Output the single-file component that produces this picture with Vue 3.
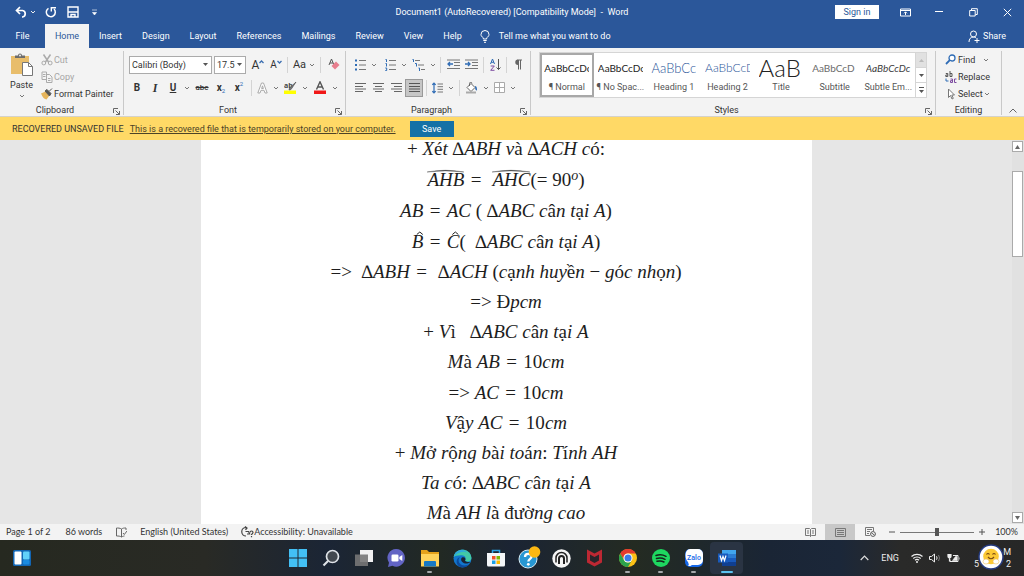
<script setup>
import { h } from 'vue'

const Chev = () =>
  h('svg', { class: 'chev', viewBox: '0 0 6 6', width: 6, height: 6 }, [
    h('path', { d: 'M1 2l2 2 2-2', fill: 'none', stroke: '#777' })
  ])

const Launcher = () =>
  h('svg', { viewBox: '0 0 7 7', width: 7, height: 7 }, [
    h('path', { d: 'M.5 5V.5H5M2.5 2.5l4 4M6.500 3v3.500H3', fill: 'none', stroke: '#666' })
  ])

const tabs = ['File', 'Home', 'Insert', 'Design', 'Layout', 'References', 'Mailings', 'Review', 'View', 'Help']

const styles = [
  { sample: 'AaBbCcDc', name: '¶ Normal', cls: 'body' },
  { sample: 'AaBbCcDc', name: '¶ No Spac...', cls: 'body' },
  { sample: 'AaBbCc', name: 'Heading 1', cls: 'h1' },
  { sample: 'AaBbCcD', name: 'Heading 2', cls: 'h2' },
  { sample: 'AaB', name: 'Title', cls: 'title' },
  { sample: 'AaBbCcD', name: 'Subtitle', cls: 'sub' },
  { sample: 'AaBbCcDc', name: 'Subtle Em...', cls: 'em' }
]

// {XYZ} marks a group under a wide hat, ^x a superscript
const lines = [
  { t: '+ Xét ∆ABH và ∆ACH có:', tall: true },
  { t: '{AHB} =  {AHC}(= 90^o)', tall: true },
  { t: 'AB = AC ( ∆ABC cân tại A)', tall: true },
  { t: '{B} = {C}(  ∆ABC cân tại A)' },
  { t: '=>  ∆ABH =  ∆ACH (cạnh huyền − góc nhọn)' },
  { t: '=> Đpcm' },
  { t: '+ Vì   ∆ABC cân tại A' },
  { t: 'Mà AB = 10cm', tall: true },
  { t: '=> AC = 10cm' },
  { t: 'Vậy AC = 10cm' },
  { t: '+ Mở rộng bài toán: Tính AH' },
  { t: 'Ta có: ∆ABC cân tại A' },
  { t: 'Mà AH là đường cao' }
]

// Plain Latin letters are set in italic, everything else stays upright;
// a relation sign gets a thick space on both sides
const runs = (t) =>
  (t.replace(/ = /g, '\u2004=\u2004').match(/\{[A-Z]+\}|\^[a-z]|[A-Za-z]+|[^A-Za-z{}^]+/g) || []).map((s) => {
    if (s[0] === '{') return { kind: s.length > 3 ? 'arc' : 'hat', s: s.slice(1, -1) }
    if (s[0] === '^') return { kind: 'sup', s: s.slice(1) }
    return { kind: /^[A-Za-z]/.test(s) ? 'it' : 'up', s }
  })
</script>

<template>
  <div class="app">
    <header class="top">
      <div class="titlebar">
        <div class="quick">
          <button aria-label="Undo"><svg width="13" height="12" viewBox="0 0 13 12"><path d="M5 1L1.500 4.500 5 8M2 4.500h5.500a3.300 3.300 0 010 6.500H7" fill="none" stroke="#fff" stroke-width="1.700" /></svg></button>
          <Chev class="pale" />
          <button aria-label="Repeat" class="repeat"><svg width="12" height="12" viewBox="0 0 12 12"><path d="M3.500 2.300A4.500 4.500 0 109 3" fill="none" stroke="#fff" stroke-width="1.500" /><path d="M6.300 5.500V1.700H11" fill="none" stroke="#fff" stroke-width="1.400" /></svg></button>
          <button aria-label="Save document" class="disk"><svg width="12" height="12" viewBox="0 0 12 12"><path d="M1 1h10v10H1zM1 6h10M4 11V8.500h4V11" fill="none" stroke="#fff" stroke-width="1.400" /></svg></button>
          <button aria-label="Customize toolbar" class="more"><svg width="5" height="7" viewBox="0 0 5 7"><path d="M0 1h5M.5 3.500h4L2.500 6z" fill="#fff" stroke="#fff" stroke-width=".6" /></svg></button>
        </div>
        <h1>Document1 (AutoRecovered) [Compatibility Mode]&nbsp; -&nbsp; Word</h1>
        <div class="window">
          <button class="signin">Sign in</button>
          <button aria-label="Ribbon display options"><svg width="11" height="9" viewBox="0 0 11 9"><path d="M.5 1h10v7H.5zM.5 2.500h10M5.500 7V4M4 5.300l1.500-1.500L7 5.300" fill="none" stroke="#fff" /></svg></button>
          <button aria-label="Minimize"><svg width="8" height="8" viewBox="0 0 8 8"><path d="M0 3.500h8" stroke="#fff" /></svg></button>
          <button aria-label="Restore"><svg width="9" height="9" viewBox="0 0 9 9"><path d="M.7 2.500h5.500v5.500H.7zM2.500 2.300V.7h5.800v5.800H6.500" fill="none" stroke="#fff" /></svg></button>
          <button aria-label="Close"><svg width="9" height="9" viewBox="0 0 9 9"><path d="M.8.8l7.400 7.400M8.200.8L.8 8.200" stroke="#fff" /></svg></button>
        </div>
      </div>
      <nav class="tabs">
        <button v-for="t in tabs" :key="t" :class="['tab', 'tab-' + t.toLowerCase()]">{{ t }}</button>
        <button class="tell">
          <svg width="10" height="13" viewBox="0 0 10 13"><path d="M3.300 9V7.800C1.800 6.800 1 5.800 1 4.500a4 4 0 018 0c0 1.300-.8 2.300-2.300 3.300V9zM3.300 10.500h3.400M4 12.300h2" fill="none" stroke="#fff" /></svg>
          Tell me what you want to do
        </button>
        <button class="share">
          <svg width="12" height="13" viewBox="0 0 12 13"><path d="M5.500 7A3 3 0 105.500 1a3 3 0 000 6zM1 12c0-3 1.500-5 4.500-5 1 0 1.800.3 2.400.8M9 8v5M6.500 10.500h5" fill="none" stroke="#fff" /></svg>
          Share
        </button>
      </nav>
    </header>

    <section class="ribbon">
      <div class="group clipboard">
        <div class="tools">
          <button class="paste">
            <svg width="22" height="23" viewBox="0 0 22 23"><path d="M0 3h18v18H0z" fill="#e8bd6b" /><path d="M4 5V2.500h3a2 2 0 014 0h3V5z" fill="#6c6c6c" /><circle cx="9" cy="2.500" r="1" fill="#eee" /><path d="M11.500 9.500h6l4 4v9h-10z" fill="#fff" stroke="#777" /><path d="M17.500 9.500v4h4" fill="none" stroke="#777" /></svg>
            <span>Paste</span>
            <Chev />
          </button>
          <div class="clip">
            <button class="off"><svg width="12" height="12" viewBox="0 0 12 12"><path d="M2.500.5l5 7.500M9.500.5l-5 7.500" stroke="#aaa" stroke-width="1.500" /><circle cx="2.800" cy="9" r="1.900" fill="none" stroke="#aaa" /><circle cx="9.200" cy="9" r="1.900" fill="none" stroke="#aaa" /></svg>Cut</button>
            <button class="off"><svg width="12" height="12" viewBox="0 0 12 12"><path d="M1 1h4.500v7.500H1zM5.500 3.500h3l2.500 2.500v5.500H5.500zM2 3.500h2.500M2 5.500h2.500M7 7.500h2.500M7 9.500h2.500" fill="none" stroke="#aaa" /></svg>Copy</button>
            <button><svg width="12" height="12" viewBox="0 0 12 12"><path d="M0 5.500l4.500-2 4 4-3 4c-2-.3-4-2-5.500-6z" fill="#e6b55c" /><path d="M4 3l2-1.500 4 4L8.500 8zM8.500 3l2.500-2.500" fill="#555" stroke="#555" /></svg>Format Painter</button>
          </div>
        </div>
        <footer>Clipboard<button class="launch" aria-label="Clipboard options"><Launcher /></button></footer>
      </div>

      <div class="group font">
        <div class="tools stack">
          <div class="row">
            <label class="combo family"><select aria-label="Font"><option>Calibri (Body)</option></select><svg width="5" height="3" viewBox="0 0 5 3"><path d="M0 0h5L2.500 3z" fill="#555" /></svg></label>
            <label class="combo size"><select aria-label="Font size"><option>17.5</option></select><svg width="5" height="3" viewBox="0 0 5 3"><path d="M0 0h5L2.500 3z" fill="#555" /></svg></label>
            <button class="w20 big" aria-label="Grow font">A<svg width="5" height="4" viewBox="0 0 5 4"><path d="M.5 3l2-2 2 2" fill="none" stroke="#3a6db0" stroke-width="1.300" /></svg></button>
            <button class="w16 mid" aria-label="Shrink font">A<svg width="5" height="4" viewBox="0 0 5 4"><path d="M.5 1l2 2 2-2" fill="none" stroke="#3a6db0" stroke-width="1.300" /></svg></button>
            <i class="sep"></i>
            <button class="w26 case" aria-label="Change case"><span class="aa">Aa</span><Chev /></button>
            <i class="sep"></i>
            <button class="w20" aria-label="Clear formatting"><svg width="12" height="13" viewBox="0 0 12 13"><path d="M1 7L3.500 1 6 7M2 5h3" fill="none" stroke="#555" /><path d="M8 3.500l3.500 3.500-4.500 4.500L3.500 8z" fill="#e87e8e" /></svg></button>
          </div>
          <div class="row second">
            <button class="w18"><b>B</b></button>
            <button class="w18"><b class="ital">I</b></button>
            <button class="w18"><b class="under">U</b></button>
            <button class="w10" aria-label="Underline style"><Chev /></button>
            <button class="w20"><s>abc</s></button>
            <button class="w18 scr" aria-label="Subscript"><b>x</b><sub>2</sub></button>
            <button class="w18 scr" aria-label="Superscript"><b>x</b><sup>2</sup></button>
            <i class="sep"></i>
            <button class="w26 fx" aria-label="Text effects"><svg width="11" height="12" viewBox="0 0 11 12"><path d="M.8 11L4.500 1h2l3.700 10H8L7 8.300H4L3 11zM4.600 6.500h1.800l-.9-2.700z" fill="#fff" stroke="#aaa" /></svg><Chev /></button>
            <button class="w30" aria-label="Highlight"><svg width="13" height="13" viewBox="0 0 13 13"><path d="M0 9.500h12V13H0z" fill="#ff0" /><text x="0" y="7" font-size="7" fill="#444" font-family="Open Sans, sans-serif" font-weight="700">ab</text><path d="M12 1L7 8.500l-2 .5.500-2z" fill="#777" stroke="#555" stroke-width=".7" /></svg><Chev /></button>
            <button class="w30" aria-label="Font colour"><svg width="13" height="13" viewBox="0 0 13 13"><path d="M0 9.500h12V13H0z" fill="#f01818" /><path d="M2.500 8.500L6 .8l3.500 7.700M3.700 6h4.600" fill="none" stroke="#555" stroke-width="1.400" /></svg><Chev /></button>
          </div>
        </div>
        <footer>Font<button class="launch" aria-label="Font options"><Launcher /></button></footer>
      </div>

      <div class="group para">
        <div class="tools stack">
          <div class="row">
            <button class="w30" aria-label="Bullets"><svg width="11" height="12" viewBox="0 0 11 12"><path d="M0 1.500h2M0 6h2M0 10.500h2" stroke="#2f6cb5" stroke-width="2" /><path d="M4 1.500h7M4 6h7M4 10.500h7" stroke="#777" /></svg><Chev /></button>
            <button class="w30" aria-label="Numbering"><svg width="11" height="12" viewBox="0 0 11 12"><path d="M.5.500h1v2.500M.5 4.500h1v3M.3 9h1.400v2.500H.3" fill="none" stroke="#2f6cb5" /><path d="M4 1.500h7M4 6h7M4 10.500h7" stroke="#777" /></svg><Chev /></button>
            <button class="w26" aria-label="Multilevel list"><svg width="13" height="12" viewBox="0 0 13 12"><path d="M.5.500h1V3M3 4.500h1.500v3M6.500 9h1v3" fill="none" stroke="#2f6cb5" /><path d="M3 1.500h5M6 6h6M9 10.500h4" stroke="#777" /></svg><Chev /></button>
            <i class="sep"></i>
            <button class="w18" aria-label="Decrease indent"><svg width="13" height="11" viewBox="0 0 13 11"><path d="M0 1h13M7 3.500h6M7 6.500h6M0 9.500h13" stroke="#777" /><path d="M6 5H1M3 3L1 5l2 2" fill="none" stroke="#2f6cb5" stroke-width="1.300" /></svg></button>
            <button class="w18" aria-label="Increase indent"><svg width="13" height="11" viewBox="0 0 13 11"><path d="M0 1h13M7 3.500h6M7 6.500h6M0 9.500h13" stroke="#777" /><path d="M0 5h5M3 3l2 2-2 2" fill="none" stroke="#2f6cb5" stroke-width="1.300" /></svg></button>
            <i class="sep"></i>
            <button class="w16" aria-label="Sort"><svg width="11" height="13" viewBox="0 0 11 13"><path d="M.5 6l2-5 2 5M1.200 4.300h2.600" fill="none" stroke="#2f6cb5" /><path d="M.7 8h3.600L.7 12.300h3.800" fill="none" stroke="#7d4ca0" /><path d="M8.500 1v10.500M6.500 9.500l2 2 2-2" fill="none" stroke="#555" /></svg></button>
            <i class="sep"></i>
            <button class="w16" aria-label="Show marks"><svg width="8" height="11" viewBox="0 0 8 11"><path d="M4 6a2.600 2.600 0 010-5.500z" fill="#666" /><path d="M3.500 1H8M4.500 1v9.500M6.500 1v9.500" fill="none" stroke="#666" /></svg></button>
          </div>
          <div class="row second">
            <button class="w18" aria-label="Align left"><svg width="11" height="9" viewBox="0 0 11 9"><path d="M0 .5h11M0 3.500h8M0 6h11M0 8.500h8" stroke="#666" /></svg></button>
            <button class="w18" aria-label="Center"><svg width="11" height="9" viewBox="0 0 11 9"><path d="M0 .5h11M2 3.500h7M0 6h11M2 8.500h7" stroke="#666" /></svg></button>
            <button class="w18" aria-label="Align right"><svg width="11" height="9" viewBox="0 0 11 9"><path d="M0 .5h11M3 3.500h8M0 6h11M3 8.500h8" stroke="#666" /></svg></button>
            <button class="w18 on" aria-label="Justify"><svg width="11" height="9" viewBox="0 0 11 9"><path d="M0 .5h11M0 3.500h11M0 6h11M0 8.500h11" stroke="#555" /></svg></button>
            <i class="sep"></i>
            <button class="w26" aria-label="Line spacing"><svg width="11" height="12" viewBox="0 0 11 12"><path d="M2 1v10M.3 2.800L2 1l1.700 1.800M.3 9.200L2 11l1.700-1.800" fill="none" stroke="#2f6cb5" stroke-width="1.200" /><path d="M5.500 2h5.500M5.500 4.700h5.500M5.500 7.300h5.500M5.500 10h5.500" stroke="#777" /></svg><Chev /></button>
            <i class="sep"></i>
            <button class="w28" aria-label="Shading"><svg width="13" height="12" viewBox="0 0 13 12"><path d="M6 1.500l4 4-4 4-4-4z" fill="#fff" stroke="#666" /><path d="M4.500 4V1.500a1.200 1.200 0 012.400 0" fill="none" stroke="#666" /><path d="M10 4c2 0 2 3 2 4.500-1.500 0-2-1.500-2-4.500z" fill="#2f6cb5" /><path d="M1 10.500h10" stroke="#aaa" stroke-width="2" /></svg><Chev /></button>
            <button class="w28" aria-label="Borders"><svg width="11" height="11" viewBox="0 0 11 11"><path d="M.5.500h10v10H.5zM5.500 0v11M0 5.500h11" fill="#fff" stroke="#aaa" /></svg><Chev /></button>
          </div>
        </div>
        <footer>Paragraph<button class="launch" aria-label="Paragraph options"><Launcher /></button></footer>
      </div>

      <div class="group styles">
        <div class="tools">
          <div class="gallery">
            <button v-for="(s, i) in styles" :key="s.name" :class="['style', { picked: i === 0 }]">
              <span :class="['sample', s.cls]">{{ s.sample }}</span>
              <span class="sname">{{ s.name }}</span>
            </button>
            <div class="spin">
              <button aria-label="Previous styles" class="dim"><svg width="5" height="3" viewBox="0 0 5 3"><path d="M0 3h5L2.500 0z" fill="#bbb" /></svg></button>
              <button aria-label="Next styles"><svg width="5" height="3" viewBox="0 0 5 3"><path d="M0 0h5L2.500 3z" fill="#555" /></svg></button>
              <button aria-label="All styles"><svg width="5" height="6" viewBox="0 0 5 6"><path d="M0 0h5v1H0zM0 3h5L2.500 6z" fill="#555" /></svg></button>
            </div>
          </div>
        </div>
        <footer>Styles<button class="launch" aria-label="Style options"><Launcher /></button></footer>
      </div>

      <div class="group editing">
        <div class="tools edit">
          <button><svg width="12" height="11" viewBox="0 0 12 11"><circle cx="7" cy="4" r="3" fill="#fff" stroke="#2f6cb5" stroke-width="1.300" /><path d="M4.800 6.200L1 10" stroke="#2f6cb5" stroke-width="1.800" /></svg>Find<Chev class="gap" /></button>
          <button><svg width="12" height="12" viewBox="0 0 12 12"><path d="M.8 2.500h2v3H.8V4h2M5 0v5.500h2v-3H5" fill="none" stroke="#555" /><path d="M5.500 8h2v3.500h-2V9.700h2M11.500 8H9.500v3.500h2" fill="none" stroke="#7d4ca0" /><path d="M1 7.500v2.500h2.500" fill="none" stroke="#2f6cb5" /></svg>Replace</button>
          <button><svg width="12" height="12" viewBox="0 0 12 12"><path d="M3.500 1v8.500l2-2 1.500 3.500 1.300-.6L6.800 7h2.700z" fill="#fff" stroke="#777" /></svg>Select<Chev /></button>
        </div>
        <footer>Editing</footer>
      </div>
      <button class="collapse" aria-label="Collapse ribbon"><svg width="8" height="5" viewBox="0 0 8 5"><path d="M.5 4.500L4 1l3.500 3.500" fill="none" stroke="#666" /></svg></button>
    </section>

    <div class="notice">
      <strong>RECOVERED UNSAVED FILE</strong>
      <a href="#">This is a recovered file that is temporarily stored on your computer.</a>
      <button>Save</button>
    </div>

    <main class="canvas">
      <div class="view">
        <article class="page">
          <p v-for="(l, i) in lines" :key="i" :class="{ tall: l.tall }"><template v-for="(r, j) in runs(l.t)" :key="j"><span :class="r.kind">{{ r.s }}<svg v-if="r.kind === 'arc'" class="over" viewBox="0 0 32 4" preserveAspectRatio="none"><path d="M0 3Q16-.5 32 3Q16 .8 0 3z" fill="#333" stroke="#333" stroke-width=".3" /></svg><svg v-if="r.kind === 'hat'" class="over small" viewBox="0 0 8 4"><path d="M1 3.500l3-2.500 3 2.500" fill="none" stroke="#222" /></svg></span></template></p>
        </article>
      </div>
      <div class="scroll">
        <button aria-label="Scroll up"><svg width="5" height="4" viewBox="0 0 5 4"><path d="M0 4h5L2.500 0z" fill="#666" /></svg></button>
        <div class="track"><div class="thumb"></div></div>
        <button aria-label="Scroll down"><svg width="5" height="4" viewBox="0 0 5 4"><path d="M0 0h5L2.500 4z" fill="#666" /></svg></button>
      </div>
    </main>

    <div class="status">
      <span class="pg">Page 1 of 2</span>
      <span class="wd">86 words</span>
      <svg class="proof" width="11" height="11" viewBox="0 0 11 11"><path d="M5.500 2C4 1 2 1 .5 1v8c2 0 3.500 0 5 1zM5.500 2C7 1 8 1 10 1v2M5.500 10c1-.6 1.500-.8 3-1M7 6l1.300 1.500L11 4" fill="none" stroke="#666" /></svg>
      <span class="lang">English (United States)</span>
      <svg width="13" height="12" viewBox="0 0 13 12"><path d="M5 1.500A4 4 0 105 10M4 .5l2 1.500-1.500 1.800M4.500 5.500h3l1.500 3M6 8h2" fill="none" stroke="#444" stroke-width="1.200" /><path d="M9 6.500c0-2 3-2 3 0 0 1.300-1.500 1-1.500 2.500M10.500 10v1.300" fill="none" stroke="#444" stroke-width="1.200" /></svg>
      <span>Accessibility: Unavailable</span>
      <div class="zoom">
        <button aria-label="Read mode"><svg width="11" height="9" viewBox="0 0 11 9"><path d="M.5.500h4l1 1 1-1h4v7h-4l-1 1-1-1h-4zM5.500 1.500v7M2 3h2M2 5h2M7 3h2M7 5h2" fill="none" stroke="#777" /></svg></button>
        <button aria-label="Print layout" class="act"><svg width="11" height="9" viewBox="0 0 11 9"><path d="M.5.500h10v8H.5zM2 2.500h7M2 4.500h7M2 6.500h7" fill="none" stroke="#777" /></svg></button>
        <button aria-label="Web layout"><svg width="11" height="10" viewBox="0 0 11 10"><path d="M5 8.500H.5v-8h8V4M2 2.500h5M2 4.500h3M2 6.500h2" fill="none" stroke="#777" /><circle cx="8" cy="7" r="2.400" fill="#fff" stroke="#555" /><path d="M6.500 6l3 2" stroke="#555" /></svg></button>
        <button class="pm" aria-label="Zoom out"><svg width="6" height="6" viewBox="0 0 6 6"><path d="M0 3h6" stroke="#555" /></svg></button>
        <input type="range" min="0" max="100" value="50" aria-label="Zoom" />
        <button class="pm" aria-label="Zoom in"><svg width="6" height="6" viewBox="0 0 6 6"><path d="M0 3h6M3 0v6" stroke="#555" /></svg></button>
        <span class="pct">100%</span>
      </div>
    </div>

    <footer class="taskbar">
      <button class="widgets" aria-label="Widgets"><svg width="18" height="16" viewBox="0 0 18 16"><rect width="18" height="16" rx="1.500" fill="#1266b4" /><rect x="1.500" y="1.500" width="7" height="13" rx="1" fill="#fff" /><rect x="10" y="1.500" width="6.500" height="8" rx="1" fill="#62d1fa" /><rect x="10" y="10" width="6.500" height="4.500" rx="1" fill="#1a8be0" /></svg></button>
      <div class="apps">
        <button aria-label="Start"><svg width="18" height="18" viewBox="0 0 18 18"><path d="M0 0h8.500v8.500H0zM9.500 0H18v8.500H9.500zM0 9.500h8.500V18H0zM9.500 9.500H18V18H9.500z" fill="#43c0f5" /></svg></button>
        <button aria-label="Search"><svg width="18" height="18" viewBox="0 0 18 18"><circle cx="10.500" cy="7.500" r="6" fill="#42484f" stroke="#dfe3e8" stroke-width="1.700" /><path d="M6 12l-4.500 4.500" stroke="#dfe3e8" stroke-width="2.200" /></svg></button>
        <button aria-label="Task view"><svg width="20" height="18" viewBox="0 0 20 18"><path d="M6 1h13v12H6z" fill="#f1f1f1" /><path d="M1 5.500h13V17H1z" fill="#777" fill-opacity=".9" /></svg></button>
        <button aria-label="Chat"><svg width="19" height="18" viewBox="0 0 19 18"><path d="M9.500 0a8.800 8.800 0 11-4 16.800L1 18l1-4.300A8.800 8.800 0 019.500 0z" fill="#6264c4" /><rect x="4.500" y="5.500" width="7" height="7" rx="1.300" fill="#fff" /><path d="M12.300 8l3-2v6l-3-2z" fill="#fff" /></svg></button>
        <button aria-label="File Explorer" class="run"><svg width="20" height="17" viewBox="0 0 20 17"><path d="M1 0h6l2 2h10v14H1z" fill="#e5a21b" /><path d="M1 4h18v12.500H1z" fill="#ffd35b" /><path d="M4 16.500V12a1 1 0 011-1h10a1 1 0 011 1v4.500z" fill="#1779c4" /></svg></button>
        <button aria-label="Edge"><svg width="19" height="19" viewBox="0 0 19 19"><circle cx="9.500" cy="9.500" r="9" fill="#1277ce" /><path d="M.7 8C2-1.500 17-2 18.400 8.500c.4 4-4.400 5-6.400 3.300 1.400-1.300 1-5-3-5.500C5 6 2 7 .7 8z" fill="#42c9a5" /><path d="M.7 8C2 .5 11-1 14 3.500 9 1.500 4 4 .7 8z" fill="#2fa8de" /><path d="M7 8c-3 3-1 8.500 4.500 8.500 2 0 4-.8 5-2-2 3.500-6 4.500-9.500 3.500C2.500 15.500 2.500 9.500 7 8z" fill="#0c4a9c" /><path d="M9 8.500c-2 1.500-.5 5.500 3.500 6 2 .2 4-.5 5-1.500-2.500.3-4.700.1-5.500-1.200 1-1.500.3-4.300-3-3.300z" fill="#1b2433" /></svg></button>
        <button aria-label="Store"><svg width="18" height="18" viewBox="0 0 18 18"><path d="M5.500 4V1.500h7V4" fill="none" stroke="#29a3e3" stroke-width="1.500" /><path d="M0 4h18v12a1.500 1.500 0 01-1.500 1.500h-15A1.500 1.500 0 010 16z" fill="#f4f6f8" /><path d="M5 7h3.500v3.500H5z" fill="#ef5126" /><path d="M9.500 7H13v3.500H9.500z" fill="#7fb900" /><path d="M5 11.500h3.500V15H5z" fill="#1ba0e8" /><path d="M9.500 11.500H13V15H9.500z" fill="#fbb900" /></svg></button>
        <button aria-label="Help"><svg width="24" height="24" viewBox="0 0 24 24"><circle cx="11" cy="13" r="9" fill="#2797d3" stroke="#d8ebf5" /><path d="M8 11c0-4 6.500-4 6.500-.3C14.500 13 11.500 12.700 11.300 15.500" fill="none" stroke="#fff" stroke-width="2.300" /><circle cx="11.300" cy="18.300" r="1.400" fill="#fff" /><circle cx="17.500" cy="6" r="5.800" fill="#fdb813" /></svg></button>
        <button aria-label="Headset"><svg width="19" height="19" viewBox="0 0 19 19"><circle cx="9.500" cy="9.500" r="9.200" fill="#f5f5f5" /><path d="M4 13.500V9a5.500 5.500 0 0111 0v4.500" fill="none" stroke="#222" stroke-width="1.500" /><path d="M7 15V9.500a2.500 2.500 0 015 0V15" fill="none" stroke="#222" stroke-width="2" /><path d="M9.500 9v7" stroke="#f5f5f5" /></svg></button>
        <button aria-label="McAfee"><svg width="17" height="18" viewBox="0 0 17 18"><path d="M1 .5l7.500 4L16 .5v13L8.500 17.500 1 13.500z" fill="#bd2833" /><path d="M4 5.500l4.500 2.500L13 5.500v6l-4.500 2.500L4 11.500z" fill="#28242a" /></svg></button>
        <button aria-label="Chrome" class="run"><svg width="18" height="18" viewBox="0 0 18 18"><circle cx="9" cy="9" r="9" fill="#fbc116" /><path d="M1.200 4.500A9 9 0 0116.800 4.500H9A4.500 4.500 0 005.100 11.200z" fill="#e33b2e" /><path d="M1.200 4.500A9 9 0 009 18l3.900-6.700a4.500 4.500 0 01-7.800 0z" fill="#2ba24c" /><circle cx="9" cy="9" r="4.500" fill="#fff" /><circle cx="9" cy="9" r="3.500" fill="#3a7ce8" /></svg></button>
        <button aria-label="Spotify" class="run"><svg width="18" height="18" viewBox="0 0 18 18"><circle cx="9" cy="9" r="9" fill="#1ed760" /><path d="M4 6.500c3.500-1.200 7-.8 10 .8M4.500 9.500c3-.9 6-.5 8.500.8M5 12.300c2.500-.7 5-.4 7 .7" fill="none" stroke="#14231a" stroke-width="1.500" stroke-linecap="round" /></svg></button>
        <button aria-label="Zalo" class="run"><svg width="18" height="18" viewBox="0 0 18 18"><rect width="18" height="18" rx="5" fill="#1668e8" /><path d="M5 0h8a5 5 0 015 5v6a5 5 0 01-5 5H7c-2 1.500-3 1-4 1 1.500-1.500.5-2 0-4C-1 9 0 0 5 0z" fill="#fff" /><text x="9" y="11" text-anchor="middle" font-size="7" font-family="Roboto, sans-serif" font-weight="500" fill="#1668e8">Zalo</text></svg></button>
        <button aria-label="Word" class="run current"><svg width="18" height="18" viewBox="0 0 18 18"><path d="M4 1h14v4H4z" fill="#41a5ee" /><path d="M4 5h14v4H4z" fill="#2b7cd3" /><path d="M4 9h14v4H4z" fill="#185abd" /><path d="M4 13h14v4H4z" fill="#103f91" /><path d="M0 4.500h10v9H0z" fill="#185abd" /><path d="M2 6.500l1.500 5L5 7.500l1.500 4L8 6.500" fill="none" stroke="#fff" stroke-width="1.200" /></svg></button>
      </div>
      <div class="tray">
        <button aria-label="Hidden icons"><svg width="9" height="6" viewBox="0 0 9 6"><path d="M.7 5L4.500 1l3.800 4" fill="none" stroke="#ddd" stroke-width="1.200" /></svg></button>
        <span class="eng">ENG</span>
        <svg width="12" height="10" viewBox="0 0 12 10"><path d="M.5 3.500a8 8 0 0111 0M2.300 5.500a5.300 5.300 0 017.400 0M4 7.300a3 3 0 014 0" fill="none" stroke="#eee" stroke-width="1.200" /><circle cx="6" cy="9" r="1" fill="#eee" /></svg>
        <svg width="12" height="10" viewBox="0 0 12 10"><path d="M.5 3.500h2L5.500 1v8l-3-2.500h-2z" fill="none" stroke="#eee" /><path d="M7.500 3.300q1.200 1.700 0 3.400" fill="none" stroke="#eee" /><path d="M9.500 2q2 3 0 6" fill="none" stroke="#777" /></svg>
        <svg width="13" height="10" viewBox="0 0 13 10"><path d="M6 2.500h5v6H3V6.500" fill="none" stroke="#eee" /><path d="M8.500 3.500h1.500v4H5.500zM12.300 4.500v2" fill="#eee" stroke="#eee" stroke-width=".6" /><path d="M1 1.500h3v2a1.500 1.500 0 01-3 0zM2.500 5v3.500" fill="#eee" stroke="#eee" stroke-width="1.200" /></svg>
        <div class="clock">
          <span>M</span>
          <span class="date"><i>5</i><i>2</i></span>
          <svg class="face" width="26" height="26" viewBox="0 0 26 26"><circle cx="13" cy="13" r="12" fill="#fff" stroke="#253b80" stroke-width="1.500" /><circle cx="13" cy="12.500" r="7.800" fill="#fcc935" /><path d="M8.500 10.500q1.500-2 3 0M14.500 10.500q1.500-2 3 0M10 13q3 3.500 6 0" fill="none" stroke="#7a4a12" stroke-width="1.200" /><ellipse cx="8" cy="17.500" rx="3" ry="2.500" fill="#fff" stroke="#f0c060" stroke-width=".6" /><ellipse cx="18" cy="17.500" rx="3" ry="2.500" fill="#fff" stroke="#f0c060" stroke-width=".6" /></svg>
        </div>
      </div>
    </footer>
  </div>
</template>

<style>
html, body { margin: 0; background: #e6e6e6; }
</style>

<style scoped>
.app { height: 100vh; display: flex; flex-direction: column; overflow: hidden; font: 9px/14px Roboto, "Noto Sans", sans-serif; color: #333; }
button, select, input { font: inherit; color: inherit; }
button { border: 0; padding: 0; margin: 0; background: none; display: flex; align-items: center; justify-content: center; white-space: nowrap; }
svg { flex: none; display: block; }
.top { background: #2b579a; color: #fff; flex: none; }
.titlebar { height: 24px; display: grid; grid-template-columns: 1fr auto 1fr; align-items: center; }
.quick { display: flex; align-items: center; padding-left: 15px; }
.quick .chev { margin: 0 0 0 2px; }
.pale { filter: brightness(2); }
.repeat { margin-left: 9px; }
.disk { margin-left: 10px; }
.more { margin-left: 13px; }
.titlebar h1 { margin: 0; font-size: 9px; font-weight: 400; white-space: nowrap; }
.window { display: flex; justify-content: flex-end; align-items: center; }
.window button { width: 34px; height: 24px; }
.window .signin { width: 44px; height: 14px; background: #fff; color: #2b579a; margin-right: 9px; }
.tabs { height: 24px; display: flex; align-items: stretch; padding: 0 18px 0 0; }
.tab { padding: 0 10px; }
.tab-file { width: 45px; padding: 0; }
.tab-home { background: #f3f3f3; color: #2b579a; width: 44px; padding: 0; }
.tell { gap: 9px; margin-left: 8px; }
.share { margin-left: auto; gap: 3px; }

.ribbon { flex: none; height: 69px; background: #f3f3f3; display: grid; grid-template-columns: 124px 222px 185px minmax(0, 1fr) 66px 22px; border-bottom: 1px solid #d5d2ca; box-sizing: border-box; }
.group { position: relative; display: flex; flex-direction: column; border-right: 1px solid #c9c9c9; margin: 3px 0 1px; }
.group footer { margin-top: auto; text-align: center; line-height: 9px; padding-right: 13px; }
.launch { position: absolute; right: 3px; bottom: 0; }
.tools { display: flex; }
.paste { flex-direction: column; width: 41px; justify-content: flex-start; padding: 2px 0 0 2px; box-sizing: border-box; }
.paste span { margin-top: 2px; }
.paste .chev { margin-top: 1px; }
.clip { display: flex; flex-direction: column; }
.clip button, .edit button { height: 17px; justify-content: flex-start; gap: 1px; }
.off { color: #a6a6a6; }
.stack { flex-direction: column; padding: 4px 0 0 5px; }
.row { display: flex; align-items: center; height: 19px; }
.second { height: 19px; margin-top: 4px; }
.font .second { margin-left: -1px; }
.combo { position: relative; display: flex; align-items: center; height: 18px; box-sizing: border-box; border: 1px solid #ababab; background: #fff; margin-right: 2px; }
.combo select { appearance: none; border: 0; background: none; padding: 0 0 0 2px; width: 100%; height: 16px; outline: 0; }
.combo svg { position: absolute; right: 3px; }
.family { width: 83px; }
.size { width: 32px; }
.w10 { width: 10px; } .w16 { width: 16px; } .w18 { width: 18px; } .w20 { width: 20px; } .w26 { width: 26px; } .w28 { width: 28px; } .w30 { width: 30px; }
.w26, .w28, .w30 { gap: 5px; }
.big { font-size: 12px; } .mid { font-size: 10px; }
.big svg, .mid svg { margin-bottom: 6px; }
.case { gap: 3px; }
.aa { font-size: 11px; }
.sep { width: 1px; height: 16px; background: #d4d4d4; margin: 0 3px; flex: none; }
.second b { font-size: 10px; }
.second .ital { font-family: "Liberation Serif", serif; font-style: italic; font-size: 12px; }
.under { text-decoration: underline; }
.second s { font-size: 8px; font-weight: 500; }
.scr sub, .scr sup { font-size: 6px; line-height: 6px; color: #2f6cb5; }
.scr sub { margin-top: 7px; } .scr sup { margin-bottom: 7px; }
.fx { color: #aaa; }
.on { height: 18px; background: #c6c6c6; outline: 1px solid #999; outline-offset: -1px; }
.styles .tools { padding: 1px 8px 0; }
.gallery { flex: 1; min-width: 0; display: flex; height: 46px; box-sizing: border-box; border: 1px solid #d5d5d5; background: #fff; }
.style { flex: 1 1 0; min-width: 0; flex-direction: column; box-sizing: border-box; border: 2px solid transparent; overflow: hidden; justify-content: flex-end; }
.picked { border-color: #a8a8a8; }
.sample { width: 45px; height: 22px; line-height: 22px; overflow: hidden; text-align: left; color: #222; font-family: Lato, sans-serif; font-size: 10px; }
.sname { line-height: 16px; color: #555; }
.sample.h1 { color: #2a5599; font-size: 13px; font-weight: 300; }
.sample.h2 { color: #2a5599; font-size: 12px; font-weight: 300; }
.sample.title { font-size: 24px; font-weight: 300; }
.sample.sub { color: #6b6b6b; }
.sample.em { font-style: italic; color: #404040; }
.spin { width: 10px; display: flex; flex-direction: column; border-left: 1px solid #d5d5d5; }
.spin button { flex: 1; border-bottom: 1px solid #d5d5d5; }
.spin button:last-child { border-bottom: 0; }
.dim { background: #e1e1e1; }
.edit { flex-direction: column; padding-left: 9px; }
.edit .gap { margin-left: 7px; }
.editing footer { padding-right: 0; }
.collapse { align-self: end; height: 12px; }

.notice { flex: none; height: 23px; background: #ffd966; display: flex; align-items: center; padding-left: 12px; white-space: nowrap; }
.notice strong { font-weight: 400; }
.notice a { color: #4c4326; margin-left: 6px; }
.notice button { background: #1571a6; color: #fff; width: 44px; height: 16px; margin-left: 14px; }

.canvas { flex: 1; min-height: 0; display: flex; background: #e6e6e6; }
.view { flex: 1; overflow: hidden; }
.page { width: 60%; min-width: 611px; min-height: 100%; margin: 0 auto; background: #fff; font-family: "Liberation Serif", "Times New Roman", serif; font-size: 19px; color: #1d1d1d; }
.page p { margin: 0; height: 30px; line-height: 18px; text-align: center; white-space: pre; }
.page p.tall { height: 31px; }
.it, .arc, .hat, .sup { font-style: italic; }
.sup { font-size: 14px; line-height: 10px; vertical-align: 6px; }
.arc, .hat { position: relative; display: inline-block; }
.over { position: absolute; left: 0; top: -2px; width: 100%; height: 4px; }
.over.small { left: 2px; }
.scroll { width: 12px; display: flex; flex-direction: column; background: #e1e1e1; }
.scroll button { width: 11px; height: 11px; box-sizing: border-box; border: 1px solid #aaa; background: #fff; margin: 1px 0; }
.track { flex: 1; }
.thumb { width: 11px; height: 24%; box-sizing: border-box; border: 1px solid #aaa; background: #fff; margin-top: 18px; }

.status { flex: none; height: 16px; background: #f3f3f3; display: flex; align-items: center; font-family: Lato, "Noto Sans", sans-serif; color: #333; padding-left: 6px; white-space: nowrap; }
.wd { margin-left: 15px; }
.proof { margin: 0 13px 0 14px; }
.lang { margin-right: 13px; }
.zoom { margin-left: auto; display: flex; align-items: center; padding-right: 6px; height: 16px; }
.zoom button { width: 30px; height: 16px; }
.zoom .act { background: #c8c8c8; }
.zoom .pm { width: 14px; }
.zoom input { appearance: none; width: 74px; height: 12px; margin: 0 1px; background: linear-gradient(#777, #777) center / 100% 1px no-repeat; }
.zoom input::-webkit-slider-thumb { appearance: none; width: 4px; height: 8px; background: #555; }
.pct { margin-left: 6px; }

.taskbar { flex: none; height: 36px; display: grid; grid-template-columns: 1fr auto 1fr; align-items: center; background: linear-gradient(90deg, #262920, #292a25 20%, #1b2535 32%, #222923 43%, #1b2434 50%, #242b22 62%, #1a2535 75%, #1b2739 82%, #2a2a29 88%, #272727); color: #eee; }
.widgets { justify-self: start; margin-left: 13px; }
.apps { display: flex; }
.apps button { width: 33px; height: 32px; position: relative; }
.run::after { content: ""; position: absolute; bottom: 1px; left: 14px; width: 5px; height: 2px; border-radius: 1px; background: #a5a8ab; }
.current { background: #2a3443; border-radius: 4px; }
.current::after { left: 11px; width: 12px; background: #5cc3f0; }
.tray { display: flex; align-items: center; justify-content: flex-end; padding-right: 13px; gap: 6px; }
.eng { margin: 0 6px; }
.clock { position: relative; display: flex; flex-direction: column; align-items: flex-end; line-height: 12px; width: 37px; margin-left: 8px; }
.date { display: flex; justify-content: space-between; width: 100%; }
.date i { font-style: normal; }
.face { position: absolute; left: 4px; top: -2px; }
</style>
